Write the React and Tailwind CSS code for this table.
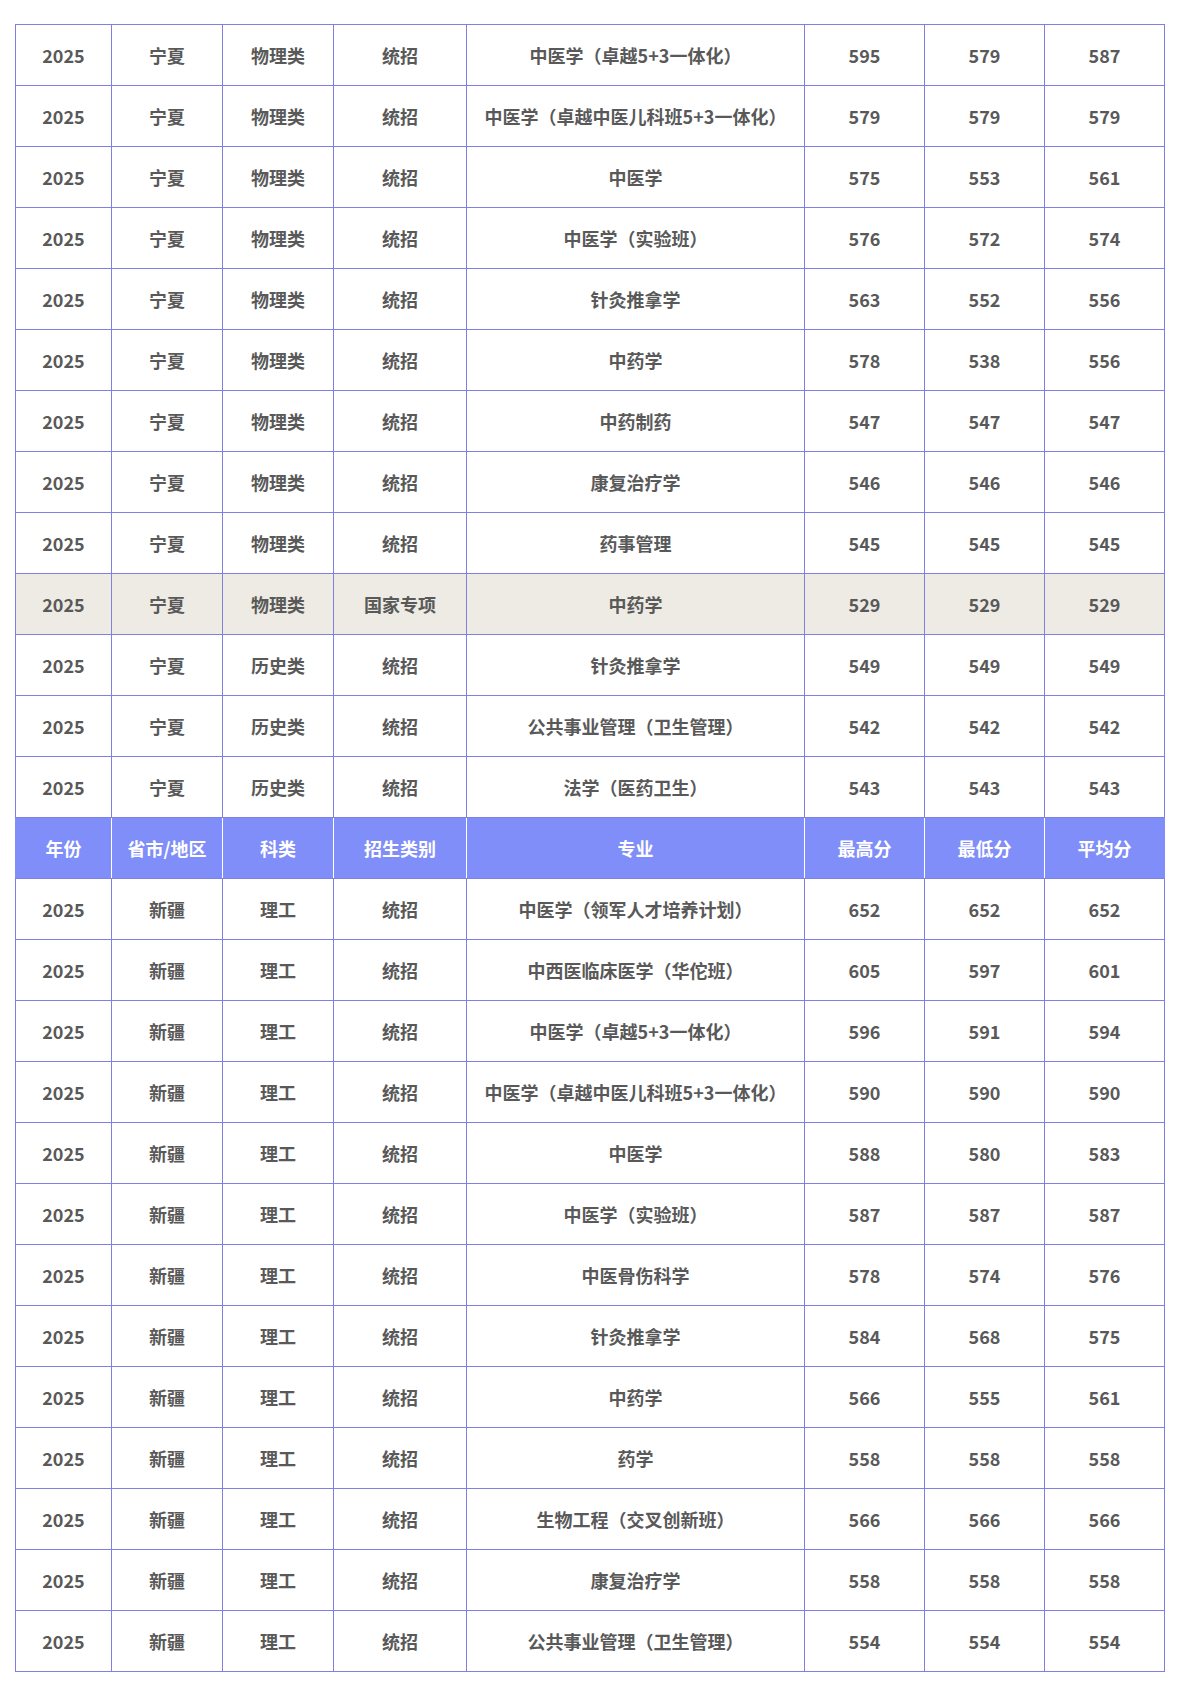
import React from "react";

const header = ["年份", "省市/地区", "科类", "招生类别", "专业", "最高分", "最低分", "平均分"];

const ningxia = [
  ["物理类", "统招", "中医学（卓越5+3一体化）", 595, 579, 587],
  ["物理类", "统招", "中医学（卓越中医儿科班5+3一体化）", 579, 579, 579],
  ["物理类", "统招", "中医学", 575, 553, 561],
  ["物理类", "统招", "中医学（实验班）", 576, 572, 574],
  ["物理类", "统招", "针灸推拿学", 563, 552, 556],
  ["物理类", "统招", "中药学", 578, 538, 556],
  ["物理类", "统招", "中药制药", 547, 547, 547],
  ["物理类", "统招", "康复治疗学", 546, 546, 546],
  ["物理类", "统招", "药事管理", 545, 545, 545],
  ["物理类", "国家专项", "中药学", 529, 529, 529],
  ["历史类", "统招", "针灸推拿学", 549, 549, 549],
  ["历史类", "统招", "公共事业管理（卫生管理）", 542, 542, 542],
  ["历史类", "统招", "法学（医药卫生）", 543, 543, 543],
];

const xinjiang = [
  ["理工", "统招", "中医学（领军人才培养计划）", 652, 652, 652],
  ["理工", "统招", "中西医临床医学（华佗班）", 605, 597, 601],
  ["理工", "统招", "中医学（卓越5+3一体化）", 596, 591, 594],
  ["理工", "统招", "中医学（卓越中医儿科班5+3一体化）", 590, 590, 590],
  ["理工", "统招", "中医学", 588, 580, 583],
  ["理工", "统招", "中医学（实验班）", 587, 587, 587],
  ["理工", "统招", "中医骨伤科学", 578, 574, 576],
  ["理工", "统招", "针灸推拿学", 584, 568, 575],
  ["理工", "统招", "中药学", 566, 555, 561],
  ["理工", "统招", "药学", 558, 558, 558],
  ["理工", "统招", "生物工程（交叉创新班）", 566, 566, 566],
  ["理工", "统招", "康复治疗学", 558, 558, 558],
  ["理工", "统招", "公共事业管理（卫生管理）", 554, 554, 554],
];

const widths = ["w-[96px]", "w-[111px]", "w-[111px]", "w-[133px]", "w-[338px]", "w-[120px]", "w-[120px]", "w-[120px]"];

function Row({ province, row }) {
  const special = row[1] === "国家专项";
  const cells = ["2025", province, ...row];
  return (
    <tr className={`h-[61px] ${special ? "bg-[#edebe3]" : "bg-white"}`}>
      {cells.map((c, i) => (
        <td key={i} className="border border-[#8080e0] p-0 text-center align-middle leading-[24px]">
          {c}
        </td>
      ))}
    </tr>
  );
}

export default function App() {
  return (
    <div className="min-h-[1683px] bg-white pt-[24px] pl-[15px]">
      <table
        className="w-[1149px] table-fixed border-collapse text-[18px] font-bold text-[#595959]"
        style={{ fontFamily: '"Noto Sans CJK SC", "Noto Sans", sans-serif' }}
      >
        <colgroup>
          {widths.map((w, i) => (
            <col key={i} className={w} />
          ))}
        </colgroup>
        <tbody>
          {ningxia.map((r, i) => (
            <Row key={"n" + i} province="宁夏" row={r} />
          ))}
          <tr className="h-[61px] bg-[#7f8ef8] text-white">
            {header.map((h, i) => (
              <td
                key={i}
                className={`border-y border-y-[#8080e0] p-0 text-center align-middle leading-[24px] ${
                  i === 0 ? "border-l border-l-[#7f8ef8]" : "border-l border-l-white"
                } ${i === header.length - 1 ? "border-r border-r-[#7f8ef8]" : ""}`}
              >
                {h}
              </td>
            ))}
          </tr>
          {xinjiang.map((r, i) => (
            <Row key={"x" + i} province="新疆" row={r} />
          ))}
        </tbody>
      </table>
    </div>
  );
}
